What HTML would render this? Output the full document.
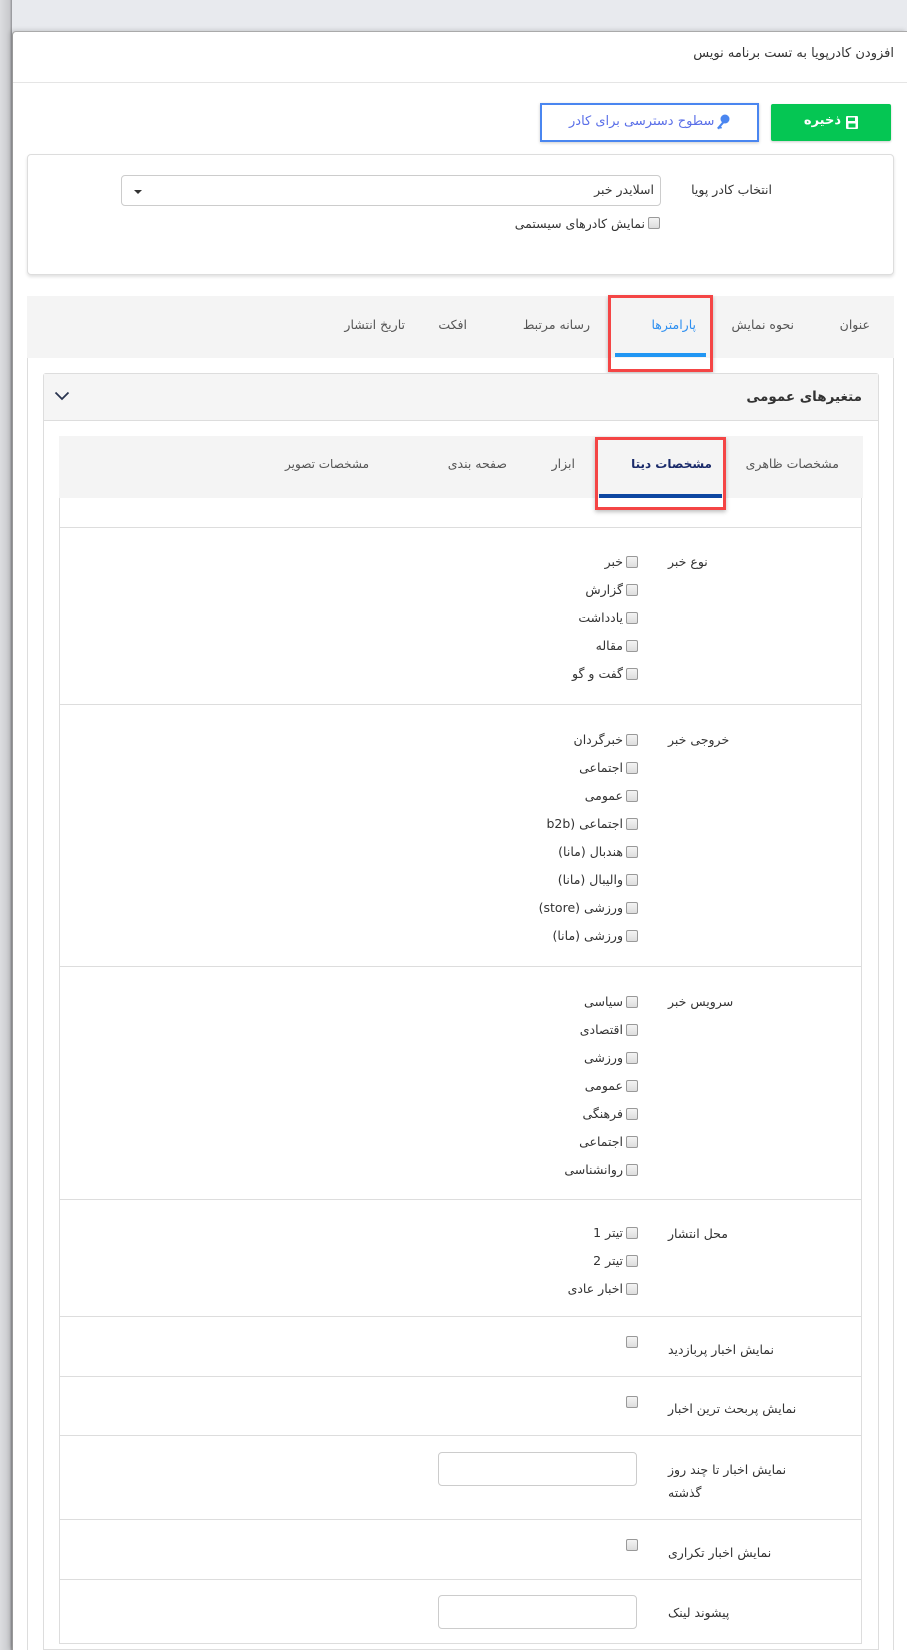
<!DOCTYPE html>
<html><head><meta charset="utf-8"><style>
*{margin:0;padding:0;box-sizing:border-box}
body{width:907px;height:1650px;background:#e8eaee;position:relative;overflow:hidden;font-family:"DejaVu Sans","Liberation Sans",sans-serif;font-size:12.5px;color:#333}
.a{position:absolute}
.t{position:absolute;white-space:nowrap;direction:rtl;line-height:16px}
.cb{position:absolute;width:12px;height:12px;border:1px solid #999;border-radius:2px;background:linear-gradient(#f4f4f4,#ddd)}
.hl{position:absolute;height:1px;background:#ddd}
.vl{position:absolute;width:1px;background:#ddd}
</style></head><body>
<div class="a" style="left:0;top:0;width:12px;height:1650px;background:linear-gradient(90deg,#dcdde0,#c9cacd 80%,#8f9094)"></div>
<div class="a" style="left:12px;top:31px;width:895px;height:1619px;background:#fff;border-left:1px solid #999;border-top:1px solid #aaa;border-top-left-radius:4px;box-shadow:-2px -1px 4px rgba(0,0,0,.15)"></div>
<div class="t" style="right:13px;top:46px;font-size:13px">افزودن کادرپویا به تست برنامه نویس</div>
<div class="hl" style="left:13px;top:82px;width:894px;background:#e5e5e5"></div>

<div class="a" style="left:771px;top:104px;width:120px;height:37px;background:#05c653;border-radius:2px;box-shadow:0 1px 2px rgba(0,0,0,.2)"></div>
<div class="t" style="right:66px;top:113px;color:#fff;font-weight:bold;font-size:13px">ذخیره</div>
<svg class="a" style="left:846px;top:116px" width="12" height="13" viewBox="0 0 12 13"><rect x="0" y="0" width="12" height="13" rx="1" fill="#fff"/><rect x="2" y="1.5" width="7" height="3.5" fill="#05c653"/><rect x="2.5" y="7.5" width="7" height="4" fill="#05c653"/></svg>
<div class="a" style="left:540px;top:103px;width:219px;height:39px;border:2px solid #4a86f0;background:#fff;box-shadow:0 1px 3px rgba(0,0,0,.2)"></div>
<div class="t" style="left:569px;top:114px;color:#5a6fe8;font-size:13px">سطوح دسترسی برای کادر</div>
<svg class="a" style="left:716px;top:114px" width="14" height="16" viewBox="0 0 14 16"><circle cx="9" cy="5" r="4.5" fill="#4a86f0"/><path d="M7 7 L1 14 L3 15.5 L4 14 L5 15 L6 13.5 L5 12.5 L9 8Z" fill="#4a86f0"/></svg>

<div class="a" style="left:27px;top:154px;width:867px;height:121px;border:1px solid #ddd;border-radius:4px;box-shadow:0 2px 3px rgba(0,0,0,.12);background:#fff"></div>
<div class="t" style="right:135px;top:182px">انتخاب کادر پویا</div>
<div class="a" style="left:121px;top:175px;width:540px;height:31px;border:1px solid #ccc;border-radius:4px;background:#fff"></div>
<div class="t" style="right:253px;top:182px">اسلایدر خبر</div>
<div class="a" style="left:134px;top:190px;width:0;height:0;border-left:4px solid transparent;border-right:4px solid transparent;border-top:4px solid #333"></div>
<div class="cb" style="left:648px;top:217px"></div>
<div class="t" style="right:262px;top:216px">نمایش کادرهای سیستمی</div>

<div class="a" style="left:27px;top:296px;width:867px;height:62px;background:#f4f4f4"></div>
<div class="vl" style="left:27px;top:358px;height:1292px"></div>
<div class="vl" style="left:893px;top:358px;height:1292px"></div>
<div class="t" style="right:37px;top:317px;color:#555">عنوان</div>
<div class="t" style="right:113px;top:317px;color:#555">نحوه نمایش</div>
<div class="t" style="right:211px;top:317px;color:#2d8ff0">پارامترها</div>
<div class="t" style="right:317px;top:317px;color:#555">رسانه مرتبط</div>
<div class="t" style="right:440px;top:317px;color:#555">افکت</div>
<div class="t" style="right:502px;top:317px;color:#555">تاریخ انتشار</div>
<div class="a" style="left:615px;top:353px;width:91px;height:4px;background:#2196f3"></div>
<div class="a" style="left:608px;top:295px;width:105px;height:77px;border:3px solid #f44545;box-shadow:0 2px 4px rgba(0,0,0,.25)"></div>

<div class="a" style="left:43px;top:373px;width:836px;height:1277px;border:1px solid #ddd;border-radius:3px 3px 0 0"></div>
<div class="a" style="left:44px;top:374px;width:834px;height:47px;background:#f5f5f5;border-bottom:1px solid #ddd"></div>
<div class="t" style="right:45px;top:389px;font-weight:bold;font-size:13.5px">متغیرهای عمومی</div>
<svg class="a" style="left:54px;top:391px" width="16" height="10" viewBox="0 0 16 10"><path d="M1.5 1.5 L8 8 L14.5 1.5" fill="none" stroke="#2a3550" stroke-width="1.8"/></svg>

<div class="a" style="left:59px;top:436px;width:804px;height:62px;background:#f4f4f4"></div>
<div class="vl" style="left:59px;top:498px;height:1146px"></div>
<div class="vl" style="left:861px;top:498px;height:1146px"></div>
<div class="t" style="right:68px;top:456px;color:#555">مشخصات ظاهری</div>
<div class="t" style="right:195px;top:456px;color:#1a2a6a;font-weight:bold;font-size:12px">مشخصات دیتا</div>
<div class="t" style="right:332px;top:456px;color:#555">ابزار</div>
<div class="t" style="right:400px;top:456px;color:#555">صفحه بندی</div>
<div class="t" style="right:538px;top:456px;color:#555;font-size:12px">مشخصات تصویر</div>
<div class="a" style="left:599px;top:494px;width:123px;height:4px;background:#0d47a1"></div>
<div class="a" style="left:595px;top:437px;width:131px;height:73px;border:3px solid #f44545;box-shadow:0 2px 4px rgba(0,0,0,.25)"></div>

<div class="hl" style="left:59px;top:527px;width:803px"></div>
<div class="hl" style="left:59px;top:704px;width:803px"></div>
<div class="hl" style="left:59px;top:966px;width:803px"></div>
<div class="hl" style="left:59px;top:1199px;width:803px"></div>
<div class="hl" style="left:59px;top:1316px;width:803px"></div>
<div class="hl" style="left:59px;top:1376px;width:803px"></div>
<div class="hl" style="left:59px;top:1435px;width:803px"></div>
<div class="hl" style="left:59px;top:1519px;width:803px"></div>
<div class="hl" style="left:59px;top:1579px;width:803px"></div>
<div class="hl" style="left:59px;top:1643px;width:803px"></div>

<div class="t" style="left:668px;top:554px">نوع خبر</div>
<div class="t" style="left:668px;top:732px">خروجی خبر</div>
<div class="t" style="left:668px;top:994px">سرویس خبر</div>
<div class="t" style="left:668px;top:1226px">محل انتشار</div>
<div class="t" style="left:668px;top:1342px">نمایش اخبار پربازدید</div>
<div class="t" style="left:668px;top:1401px">نمایش پربحث ترین اخبار</div>
<div class="t" style="left:668px;top:1462px">نمایش اخبار تا چند روز</div>
<div class="t" style="left:668px;top:1485px">گذشته</div>
<div class="t" style="left:668px;top:1545px">نمایش اخبار تکراری</div>
<div class="t" style="left:668px;top:1605px">پیشوند لینک</div>

<div class="cb" style="left:626px;top:556px"></div><div class="t" style="right:284px;top:554px">خبر</div>
<div class="cb" style="left:626px;top:584px"></div><div class="t" style="right:284px;top:582px">گزارش</div>
<div class="cb" style="left:626px;top:612px"></div><div class="t" style="right:284px;top:610px">یادداشت</div>
<div class="cb" style="left:626px;top:640px"></div><div class="t" style="right:284px;top:638px">مقاله</div>
<div class="cb" style="left:626px;top:668px"></div><div class="t" style="right:284px;top:666px">گفت و گو</div>

<div class="cb" style="left:626px;top:734px"></div><div class="t" style="right:284px;top:732px">خبرگردان</div>
<div class="cb" style="left:626px;top:762px"></div><div class="t" style="right:284px;top:760px">اجتماعی</div>
<div class="cb" style="left:626px;top:790px"></div><div class="t" style="right:284px;top:788px">عمومی</div>
<div class="cb" style="left:626px;top:818px"></div><div class="t" style="right:284px;top:816px">اجتماعی (b2b</div>
<div class="cb" style="left:626px;top:846px"></div><div class="t" style="right:284px;top:844px">هندبال (مانا)</div>
<div class="cb" style="left:626px;top:874px"></div><div class="t" style="right:284px;top:872px">والیبال (مانا)</div>
<div class="cb" style="left:626px;top:902px"></div><div class="t" style="right:284px;top:900px">ورزشی (store)</div>
<div class="cb" style="left:626px;top:930px"></div><div class="t" style="right:284px;top:928px">ورزشی (مانا)</div>

<div class="cb" style="left:626px;top:996px"></div><div class="t" style="right:284px;top:994px">سیاسی</div>
<div class="cb" style="left:626px;top:1024px"></div><div class="t" style="right:284px;top:1022px">اقتصادی</div>
<div class="cb" style="left:626px;top:1052px"></div><div class="t" style="right:284px;top:1050px">ورزشی</div>
<div class="cb" style="left:626px;top:1080px"></div><div class="t" style="right:284px;top:1078px">عمومی</div>
<div class="cb" style="left:626px;top:1108px"></div><div class="t" style="right:284px;top:1106px">فرهنگی</div>
<div class="cb" style="left:626px;top:1136px"></div><div class="t" style="right:284px;top:1134px">اجتماعی</div>
<div class="cb" style="left:626px;top:1164px"></div><div class="t" style="right:284px;top:1162px">روانشناسی</div>

<div class="cb" style="left:626px;top:1227px"></div><div class="t" style="right:284px;top:1225px">تیتر 1</div>
<div class="cb" style="left:626px;top:1255px"></div><div class="t" style="right:284px;top:1253px">تیتر 2</div>
<div class="cb" style="left:626px;top:1283px"></div><div class="t" style="right:284px;top:1281px">اخبار عادی</div>

<div class="cb" style="left:626px;top:1336px"></div>
<div class="cb" style="left:626px;top:1396px"></div>
<div class="cb" style="left:626px;top:1539px"></div>
<div class="a" style="left:438px;top:1452px;width:199px;height:34px;border:1px solid #ccc;border-radius:4px"></div>
<div class="a" style="left:438px;top:1595px;width:199px;height:34px;border:1px solid #ccc;border-radius:4px"></div>
</body></html>
